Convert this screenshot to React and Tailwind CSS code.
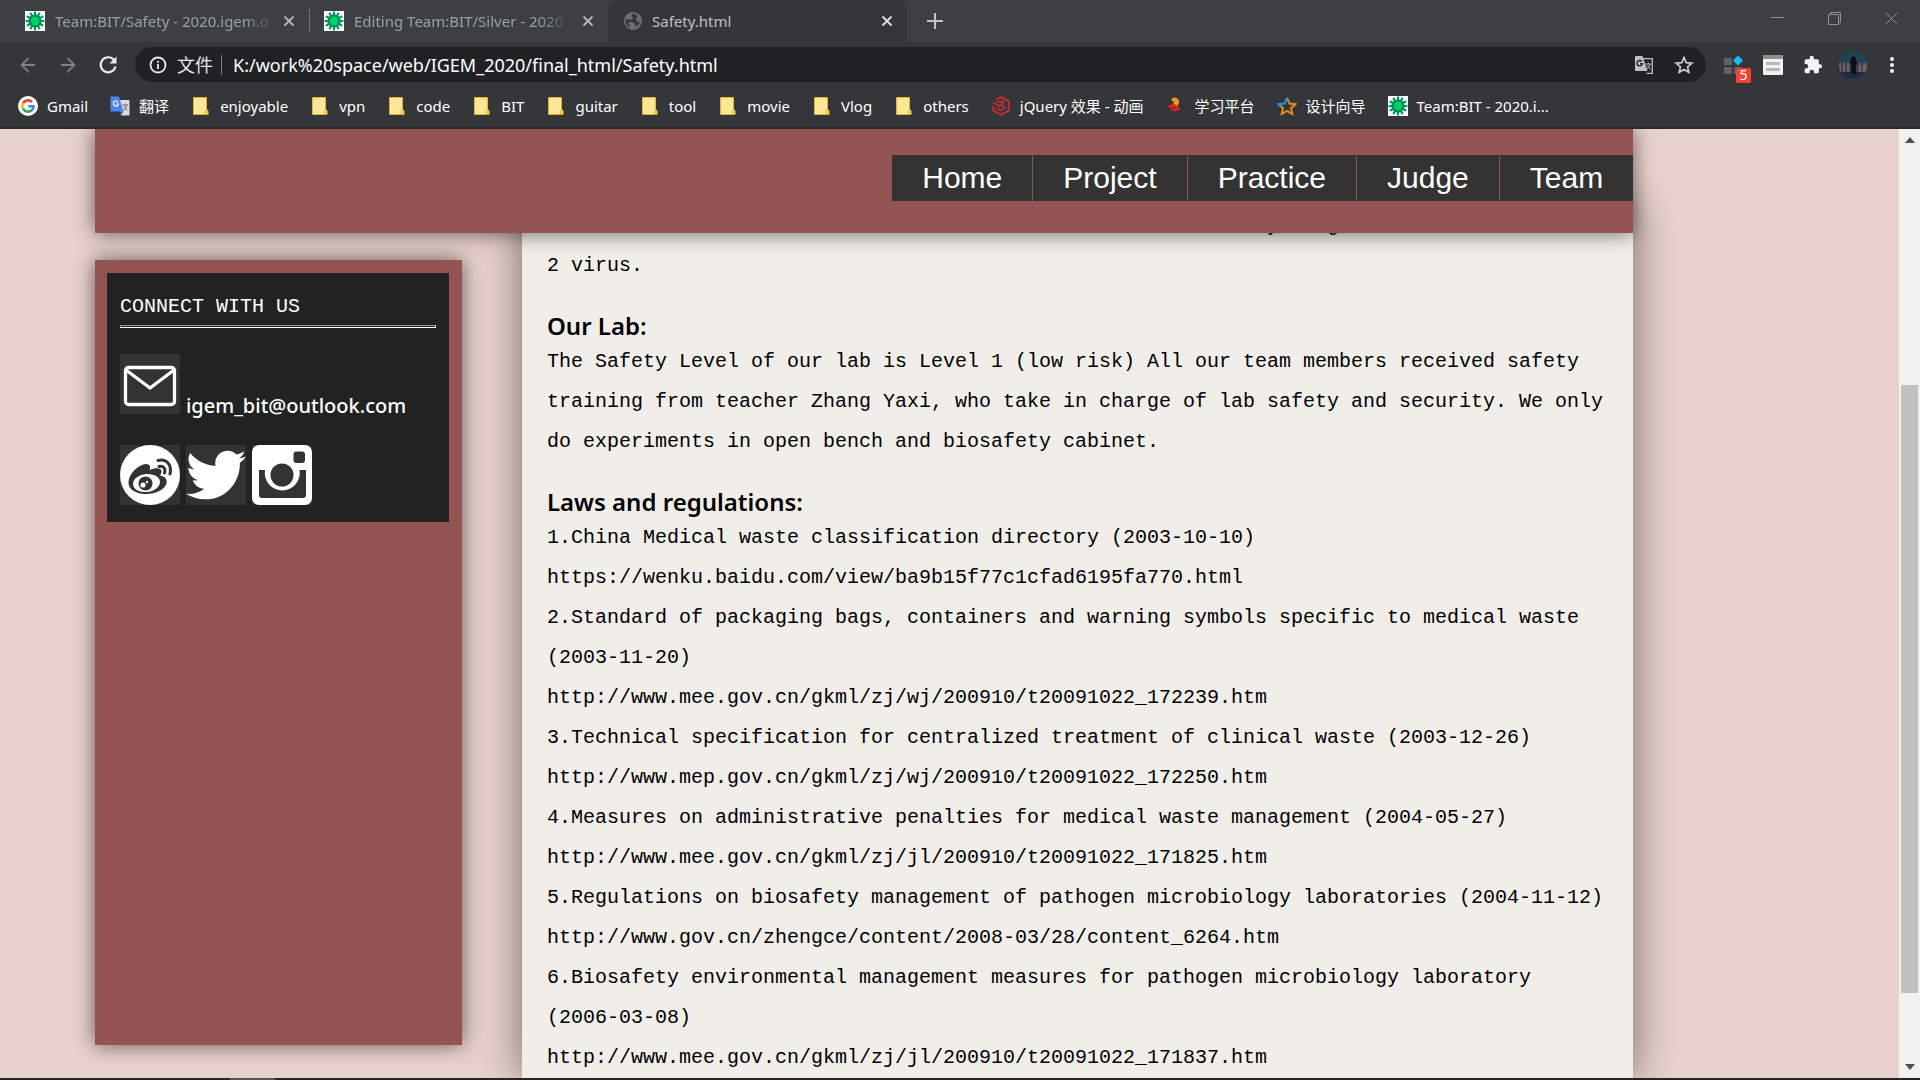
import React from "react";
import { ArrowLeft, ArrowRight } from "lucide-react";
import { FaTwitter } from "react-icons/fa";

function TeamIcon() {
  const spikes = [0, 30, 60, 90, 120, 150, 180, 210, 240, 270, 300, 330];
  return (
    <svg viewBox="0 0 20 20" className="size-5 shrink-0" aria-hidden="true">
      <rect width="20" height="20" fill="#fff" />
      {spikes.map((a) => (
        <path key={a} d="M9.2 4 L8.8 .6 H11.2 L10.8 4Z" fill="#00905c" transform={`rotate(${a} 10 10)`} />
      ))}
      <circle cx="10" cy="10" r="6.800" fill="#00905c" />
      <ellipse cx="10" cy="10" rx="4" ry="4.200" fill="#00d35c" />
    </svg>
  );
}

function GoogleIcon() {
  return (
    <svg viewBox="0 0 20 20" className="size-5 shrink-0" aria-hidden="true">
      <circle cx="10" cy="10" r="10" fill="#fff" />
      <g fill="none" strokeWidth="2.600">
        <path d="M5 7.300 A5.700 5.700 0 0 1 14 6" stroke="#ea4335" />
        <path d="M5 12.700 A5.700 5.700 0 0 1 5 7.300" stroke="#fbbc05" />
        <path d="M13.800 14.200 A5.700 5.700 0 0 1 5 12.700" stroke="#34a853" />
        <path d="M10.200 10.200 H15.600 A5.700 5.700 0 0 1 13.800 14.200" stroke="#4285f4" />
      </g>
    </svg>
  );
}

function TranslateIcon() {
  return (
    <svg viewBox="0 0 20 20" className="size-5 shrink-0" aria-hidden="true">
      <path d="M8 4 H18.500 Q19.500 4 19.500 5 V18.500 Q19.500 19.500 18.500 19.500 H11Z" fill="#dcdcdc" />
      <path d="M1.500 .5 H9 L13.500 15.500 H1.500 Q.5 15.500 .5 14.500 V1.500 Q.5 .5 1.500 .5Z" fill="#4a86ee" />
      <path d="M8.500 15.500 H13.500 L11 19.500Z" fill="#2c5fc4" />
      <path d="M8 6 A2.600 2.600 0 1 0 8.500 8 H6" fill="none" stroke="#fff" strokeWidth="1.200" />
      <path d="M12.500 9 H18 M15.200 7.500 V9 M17 9 Q16.500 12.500 13.500 14.500 M13.800 10.500 Q15 13 17.500 14.500" fill="none" stroke="#5f6b78" strokeWidth="1" />
    </svg>
  );
}

function FolderIcon() {
  return (
    <svg viewBox="0 0 20 20" className="size-5 shrink-0" aria-hidden="true">
      <path d="M2.500 1.500 H15.500 V13 L17 15 V18.500 H2.500Z" fill="#ffe694" stroke="#d9b13b" strokeWidth="1" />
      <path d="M14.500 18.500 V15 Q15.500 13.500 17 15 V18.500Z" fill="#ffd75e" stroke="#d9a92a" strokeWidth=".8" />
    </svg>
  );
}

function JqueryIcon() {
  return (
    <svg viewBox="0 0 20 20" className="size-5 shrink-0" aria-hidden="true" fill="none" stroke="#d22b31" strokeWidth="1.700">
      <path d="M5.500 3.200 L10 1 L17.800 5.200 V14.500 L10 18.800 L2.200 14.500 V10" />
      <path d="M2 6.500 L9 10.300 M6 5.500 H12.500 L10 9 Q13.500 9.500 13 12 Q12 14.800 8.500 14 L5.500 12.500" />
    </svg>
  );
}

function LearnIcon() {
  return (
    <svg viewBox="0 0 20 20" className="size-5 shrink-0" aria-hidden="true">
      <path d="M6 4 Q8 .5 11.500 2 Q15.500 4 13.500 8 L12.500 10 L7.500 8.500 Q10 6.500 8 5Z" fill="#f29a1b" />
      <path d="M1.500 9 L5 9.500 Q6 7 9 8 L13 10.500 Q15.500 12 14.500 14 Q9 16.500 5 13.500 L6.500 12.500 Q3 12 1.500 9Z" fill="#d7261c" />
      <path d="M7.500 10.500 L11.500 12.500 L8 12.800Z" fill="#35363a" />
    </svg>
  );
}

function StarBookmarkIcon() {
  return (
    <svg viewBox="0 0 20 20" className="size-5 shrink-0" aria-hidden="true" fill="none" strokeWidth="2">
      <path d="M10 2 L12.500 7.600 L18.500 8.200 L14 12.200 L15.300 18 L10 15 L4.700 18 L6 12.200 L1.500 8.200" stroke="#e58a1f" />
      <path d="M10 2 L7.500 7.600 L1.500 8.200 L4 10.400" stroke="#2490e3" />
    </svg>
  );
}

function GlobeIcon() {
  return (
    <svg viewBox="0 0 20 20" className="size-5 shrink-0" aria-hidden="true">
      <circle cx="10" cy="10" r="9" fill="#6b6f75" />
      <path d="M11 2.500 Q7 4 9 6 Q11 7 9 8.500 Q6 9 4 8 L2.500 8.500 Q2 14 7 17 Q7 14 5 12 Q9 10 11 12 Q13 13 12 16 Q16 14 17 11 Q13 11 13 8.500 Q15 6 14 4 Q12.500 5 11 2.500Z" fill="#35363a" />
    </svg>
  );
}

function CloseIcon() {
  return (
    <svg viewBox="0 0 12 12" className="size-3" aria-hidden="true" fill="none" stroke="currentColor" strokeWidth="1.800">
      <path d="M1.500 1.500 L10.500 10.500 M10.500 1.500 L1.500 10.500" />
    </svg>
  );
}

const folders = ["enjoyable", "vpn", "code", "BIT", "guitar", "tool", "movie", "Vlog", "others"];

const bookmarks = [
  { label: "Gmail", Icon: GoogleIcon },
  { label: "翻译", Icon: TranslateIcon },
  ...folders.map((label) => ({ label, Icon: FolderIcon })),
  { label: "jQuery 效果 - 动画", Icon: JqueryIcon },
  { label: "学习平台", Icon: LearnIcon },
  { label: "设计向导", Icon: StarBookmarkIcon },
  { label: "Team:BIT - 2020.i...", Icon: TeamIcon },
];

function Tab({ title }) {
  return (
    <div className="flex h-full w-[299px] items-center pl-[25px] text-[#9aa0a6]">
      <TeamIcon />
      <span className="ml-[10px] whitespace-nowrap [mask-image:linear-gradient(to_right,black_88%,#0004)]">{title}</span>
      <button type="button" aria-label="Close tab" className="ml-auto p-1 text-[#b4b7ba]">
        <CloseIcon />
      </button>
    </div>
  );
}

function TabStrip() {
  return (
    <div className="flex h-[42px] shrink-0 items-center bg-[#3c4043]">
      <Tab title="Team:BIT/Safety - 2020.igem.o" />
      <div className="ml-[10px] h-6 w-px bg-[#70757a]" />
      <div className="-ml-[11px] h-full">
        <Tab title="Editing Team:BIT/Silver - 2020" />
      </div>
      <div className="ml-[10px] flex h-full w-[299px] items-center rounded-t-lg bg-[#35363a] pl-[15px] pr-[10px] text-[#bdc1c6]">
        <GlobeIcon />
        <span className="ml-[9px] flex-1">Safety.html</span>
        <button type="button" aria-label="Close tab" className="p-1 text-[#dfe1e5]">
          <CloseIcon />
        </button>
      </div>
      <button type="button" aria-label="New tab" className="ml-5 text-[#c0c3c7]">
        <svg viewBox="0 0 16 16" className="size-4" fill="none" stroke="currentColor" strokeWidth="2">
          <path d="M8 0 V16 M0 8 H16" />
        </svg>
      </button>
      <div className="ml-auto flex h-full items-start gap-11 pr-[22px] pt-3 text-[#8e9194]">
        <button type="button" aria-label="Minimize">
          <svg viewBox="0 0 13 13" className="size-[13px]" fill="none" stroke="currentColor"><path d="M0 5.500 H13" /></svg>
        </button>
        <button type="button" aria-label="Restore">
          <svg viewBox="0 0 13 13" className="size-[13px]" fill="none" stroke="currentColor"><path d="M.5 2.500 H10.500 V12.500 H.5Z M2.500 2.500 V.5 H12.500 V10.500 H10.500" /></svg>
        </button>
        <button type="button" aria-label="Close window">
          <svg viewBox="0 0 13 13" className="size-[13px]" fill="none" stroke="currentColor"><path d="M.5 .5 L12.500 12.500 M12.500 .5 L.5 12.500" /></svg>
        </button>
      </div>
    </div>
  );
}

function Toolbar() {
  return (
    <div className="flex h-[45px] shrink-0 items-center pl-[17px] pr-6">
      <button type="button" aria-label="Back" className="text-[#7d8084]"><ArrowLeft className="size-[22px]" strokeWidth={2} /></button>
      <button type="button" aria-label="Forward" className="ml-[18px] text-[#7d8084]"><ArrowRight className="size-[22px]" strokeWidth={2} /></button>
      <button type="button" aria-label="Reload" className="ml-[18px] text-[#e8eaed]">
        <svg viewBox="0 0 22 22" className="size-[22px]" fill="none" stroke="currentColor" strokeWidth="2.200">
          <path d="M17 6 A7.500 7.500 0 1 0 18.500 12.500" />
          <path d="M19.500 2.500 V9.500 H12.500Z" fill="currentColor" stroke="none" />
        </svg>
      </button>
      <div className="ml-4 flex h-[35px] flex-1 items-center rounded-full bg-[#202124] pl-[14px] pr-3">
        <svg viewBox="0 0 18 18" className="size-[18px]" fill="none" stroke="#e8eaed" strokeWidth="1.800" aria-hidden="true">
          <circle cx="9" cy="9" r="7.500" />
          <path d="M9 8 V13 M9 5 V6.800" />
        </svg>
        <span className="ml-[10px] text-lg text-[#e8eaed]">文件</span>
        <span className="ml-2 h-5 w-px bg-[#7d8084]" />
        <input aria-label="Address" readOnly value="K:/work%20space/web/IGEM_2020/final_html/Safety.html" className="ml-[11px] min-w-0 flex-1 bg-transparent text-lg text-white outline-none" />
        <button type="button" aria-label="Translate this page">
          <svg viewBox="0 0 20 20" className="size-5">
            <path d="M9 3.700 H18.300 V18.300 H12.500" fill="none" stroke="#bdc1c6" strokeWidth="1.300" />
            <path d="M2 1 H8.500 L13.500 16 H2 Q1 16 1 15 V2 Q1 1 2 1Z" fill="#bdc1c6" />
            <path d="M7.800 6.500 A2.700 2.700 0 1 0 8.300 8.800 H6" fill="none" stroke="#202124" strokeWidth="1.400" />
            <path d="M11.500 9 H17 M14.300 7.500 V9 M16 9 Q15.500 12 13 14 M13 10.500 L16.500 14.500" fill="none" stroke="#bdc1c6" />
          </svg>
        </button>
        <button type="button" aria-label="Bookmark this page" className="ml-5">
          <svg viewBox="0 0 20 20" className="size-5" fill="none" stroke="#c9ccd0" strokeWidth="1.700">
            <path d="M10 2.500 L12.200 7.600 L17.800 8.100 L13.600 11.800 L14.800 17.300 L10 14.400 L5.200 17.300 L6.400 11.800 L2.200 8.100 L7.800 7.600Z" />
          </svg>
        </button>
      </div>
      <div className="ml-[18px] flex items-center">
        <button type="button" aria-label="Extensions, 5 notices" className="relative h-7 w-[27px]">
          <svg viewBox="0 0 27 28" className="h-7 w-[27px]">
            <g fill="#5f6368"><rect x="0" y="7" width="8" height="7" rx="1" /><rect x="0" y="16" width="8" height="7" rx="1" /><rect x="10" y="16" width="8" height="7" rx="1" /></g>
            <path d="M14 4.500 L19 9.500 L14 14.500 L9 9.500Z" fill="#12c2ff" />
          </svg>
          <span className="absolute -bottom-1 right-0 flex h-[15px] w-[15px] items-center justify-center rounded-xs bg-[#f44336] text-sm text-white">5</span>
        </button>
        <button type="button" aria-label="Reader" className="ml-3">
          <svg viewBox="0 0 20 20" className="size-5"><rect width="20" height="20" rx="1" fill="#f1f1f1" /><rect width="20" height="4" fill="#8f8f8f" /><rect x="3" y="7" width="14" height="3" rx="1" fill="#b8b8b8" /><rect x="3" y="13" width="14" height="3" rx="1" fill="#b8b8b8" /></svg>
        </button>
        <button type="button" aria-label="Extensions" className="ml-5">
          <svg viewBox="0 0 24 24" className="size-5" fill="#f1f3f4"><path d="M20.500 11H19V7a2 2 0 0 0-2-2h-4V3.500a2.500 2.500 0 0 0-5 0V5H4a2 2 0 0 0-2 2v3.800h1.500a2.700 2.700 0 0 1 0 5.400H2V20a2 2 0 0 0 2 2h3.800v-1.500a2.700 2.700 0 0 1 5.400 0V22H17a2 2 0 0 0 2-2v-4h1.500a2.500 2.500 0 0 0 0-5z" /></svg>
        </button>
        <button type="button" aria-label="Profile" className="ml-4">
          <svg viewBox="0 0 28 28" className="size-7">
            <defs><clipPath id="avatar"><circle cx="14" cy="14" r="14" /></clipPath></defs>
            <g clipPath="url(#avatar)">
              <rect width="28" height="28" fill="#1f4455" />
              <rect y="9" width="28" height="5" fill="#4a5a68" />
              <rect y="14" width="28" height="7" fill="#77616a" />
              <rect y="21" width="28" height="7" fill="#1f2a44" />
              <path d="M3 10 V21 M7 10 V21 M11 10 V21 M19 10 V21 M23 10 V21 M0 10 H28" stroke="#1a2530" />
              <path d="M12 9 Q11.500 5.500 14.500 5.500 Q17.500 5.500 17 9 Q19 12 17.500 15 V23 H12 V15 Q10.500 12 12 9Z" fill="#0c1018" />
            </g>
          </svg>
        </button>
        <button type="button" aria-label="Menu" className="ml-[21px]">
          <svg viewBox="0 0 8 18" className="h-[18px] w-2" fill="#f1f3f4"><circle cx="4" cy="3" r="2" /><circle cx="4" cy="9" r="2" /><circle cx="4" cy="15" r="2" /></svg>
        </button>
      </div>
    </div>
  );
}

function BookmarksBar() {
  return (
    <nav aria-label="Bookmarks" className="flex h-[42px] shrink-0 items-center gap-[22px] border-b-2 border-[#27292b] pb-[2px] pl-[18px] text-white">
      {bookmarks.map(({ label, Icon }) => (
        <a key={label} href="#" className="flex shrink-0 items-center gap-[9px] whitespace-nowrap">
          <Icon />
          {label}
        </a>
      ))}
    </nav>
  );
}

function ConnectCard() {
  return (
    <section className="bg-[#222] px-[13px] pb-[17px] pt-4 text-white">
      <h2 className="font-['Liberation_Mono',monospace] text-xl leading-9">CONNECT WITH US</h2>
      <hr className="h-[3px] border border-b-white border-l-[#9a9a9a] border-r-white border-t-[#9a9a9a]" />
      <div className="mt-[26px] flex gap-[6px]">
        <svg viewBox="0 0 60 60" className="size-[60px] shrink-0 bg-[#333]" fill="none" stroke="#fff" strokeWidth="3.300" aria-hidden="true">
          <rect x="5.500" y="13.500" width="49" height="37" rx="3" />
          <path d="M6 16 L30 34 L54 16" />
        </svg>
        <a href="mailto:igem_bit@outlook.com" className="mt-9 font-['Noto_Sans',sans-serif] text-xl font-medium leading-8">igem_bit@outlook.com</a>
      </div>
      <div className="mt-[23px] flex gap-[6px]">
        <a href="#" aria-label="Weibo" className="size-[60px] bg-[#333]">
          <svg viewBox="0 0 60 60" className="size-[60px]">
            <circle cx="30" cy="30" r="30" fill="#fff" />
            <path d="M8.500 37 C9 28 19 19.500 26 19 C31 19 30.500 23 29.500 25 C35 22.500 41 22.500 41.500 26 C41.500 28 40.500 29.500 40 30.500 C45 31.500 47.500 34 46.500 38.500 C44.500 45 35 49.500 25 49 C15 48.500 8 44 8.500 37Z" fill="#333" />
            <ellipse cx="26.500" cy="38" rx="13.500" ry="9" transform="rotate(-7 26.500 38)" fill="#fff" />
            <circle cx="25.500" cy="38.500" r="7" fill="#333" />
            <circle cx="23" cy="40" r="2.600" fill="#fff" />
            <circle cx="27" cy="37" r="1.200" fill="#fff" />
            <path d="M38 15.500 C47 13.500 52 20 50 29 M39 21.500 C43.500 20.500 46 23.500 44.500 28" fill="none" stroke="#333" strokeWidth="3" strokeLinecap="round" />
          </svg>
        </a>
        <a href="#" aria-label="Twitter" className="size-[60px] bg-[#333]"><FaTwitter className="size-[60px]" /></a>
        <a href="#" aria-label="Instagram" className="size-[60px] bg-[#333]">
          <svg viewBox="0 0 60 60" className="size-[60px]">
            <rect width="60" height="60" rx="7" fill="#fff" />
            <path d="M7 25 H13 A17.500 17.500 0 1 0 47.500 25 H54 V50 Q54 53 51 53 H10 Q7 53 7 50Z" fill="#333" />
            <circle cx="30" cy="30" r="11.500" fill="#333" />
            <rect x="41.500" y="6.500" width="11.500" height="11.500" rx="3" fill="#333" />
          </svg>
        </a>
      </div>
    </section>
  );
}

const laws = [
  ["1.China Medical waste classification directory (2003-10-10)", "https://wenku.baidu.com/view/ba9b15f77c1cfad6195fa770.html"],
  ["2.Standard of packaging bags, containers and warning symbols specific to medical waste (2003-11-20)", "http://www.mee.gov.cn/gkml/zj/wj/200910/t20091022_172239.htm"],
  ["3.Technical specification for centralized treatment of clinical waste (2003-12-26)", "http://www.mep.gov.cn/gkml/zj/wj/200910/t20091022_172250.htm"],
  ["4.Measures on administrative penalties for medical waste management (2004-05-27)", "http://www.mee.gov.cn/gkml/zj/jl/200910/t20091022_171825.htm"],
  ["5.Regulations on biosafety management of pathogen microbiology laboratories (2004-11-12)", "http://www.gov.cn/zhengce/content/2008-03/28/content_6264.htm"],
  ["6.Biosafety environmental management measures for pathogen microbiology laboratory (2006-03-08)", "http://www.mee.gov.cn/gkml/zj/jl/200910/t20091022_171837.htm"],
];

function Heading({ children }) {
  return <h3 className="mt-6 font-['Noto_Sans',sans-serif] text-2xl font-semibold leading-8">{children}</h3>;
}

function Article() {
  return (
    <main className="-mt-[27px] min-w-0 flex-1 self-stretch bg-[#f1eeea] px-[25px] font-['Liberation_Mono',monospace] text-xl leading-10 text-black shadow-[0_0_40px_rgba(0,0,0,0.5)]">
      <p className="whitespace-pre pl-[720px]">y    g</p>
      <p>2 virus.</p>
      <Heading>Our Lab:</Heading>
      <p>
        The Safety Level of our lab is Level 1 (low risk) All our team members received safety training from teacher
        Zhang Yaxi, who take in charge of lab safety and security. We only do experiments in open bench and biosafety
        cabinet.
      </p>
      <Heading>Laws and regulations:</Heading>
      {laws.map(([title, url]) => (
        <div key={url}>
          <p>{title}</p>
          <p>{url}</p>
        </div>
      ))}
    </main>
  );
}

function Scrollbar() {
  return (
    <div aria-hidden="true" className="flex w-[21px] shrink-0 flex-col items-center bg-[#f1f1f1] py-2">
      <svg viewBox="0 0 10 6" className="h-[6px] w-[10px]" fill="#505050"><path d="M0 6 L5 0 L10 6Z" /></svg>
      <div className="flex-[242]" />
      <div className="w-[17px] flex-[608] bg-[#c1c1c1]" />
      <div className="flex-[71]" />
      <svg viewBox="0 0 10 6" className="h-[6px] w-[10px]" fill="#505050"><path d="M0 0 H10 L5 6Z" /></svg>
    </div>
  );
}

const menu = ["Home", "Project", "Practice", "Judge", "Team"];

export default function App() {
  return (
    <div className="flex h-screen flex-col overflow-hidden bg-[#35363a] font-['Noto_Sans','Noto_Sans_CJK_SC',sans-serif] text-[15px]">
      <TabStrip />
      <Toolbar />
      <BookmarksBar />
      <div className="flex min-h-0 flex-1">
        <div className="min-w-0 flex-1 overflow-hidden bg-[#e9d2cd]">
          <div className="ml-[5%] flex h-full w-[81%] flex-col">
            <header className="relative z-10 flex h-[104px] shrink-0 justify-end bg-[#945454] pt-[26px] shadow-[0_0_20px_rgba(0,0,0,0.6)]">
              <nav className="flex h-[46px] gap-px font-['Liberation_Sans',sans-serif] text-3xl text-white">
                {menu.map((item) => (
                  <a key={item} href="#" className="bg-[#333] px-[30px] leading-[46px]">{item}</a>
                ))}
              </nav>
            </header>
            <div className="flex min-h-0 flex-1 gap-[60px]">
              <aside className="mb-[33px] mt-[27px] w-[367px] shrink-0 bg-[#945454] pl-3 pr-[13px] pt-[13px] shadow-[0_0_20px_rgba(0,0,0,0.6)]">
                <ConnectCard />
              </aside>
              <Article />
            </div>
          </div>
        </div>
        <Scrollbar />
      </div>
      <div className="flex h-[2px] shrink-0 bg-[#272324]">
        <div className="ml-[12%] w-[45px] bg-[#5a5657]" />
      </div>
    </div>
  );
}
